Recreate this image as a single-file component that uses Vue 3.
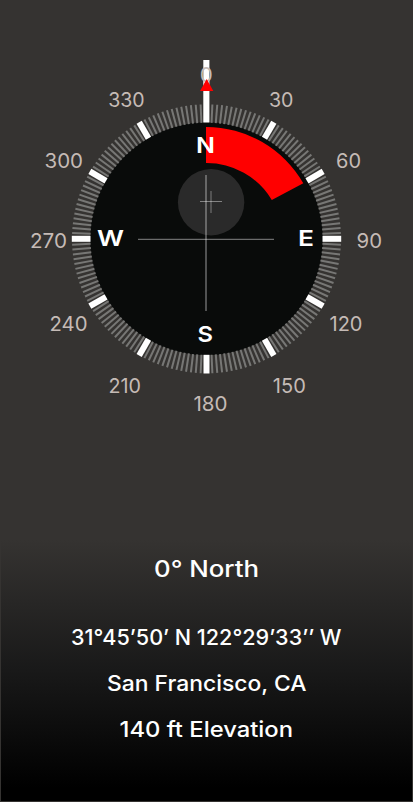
<script setup>
const CX = 206.5
const CY = 238.8
const minor = []
for (let q = 0; q < 12; q++) {
  for (let i = 0; i <= 12; i++) minor.push(q * 30 + 2.5 + i * 2.083)
}
const major = Array.from({ length: 11 }, (_, i) => (i + 1) * 30)

// x, baseline and width of every degree label
const degrees = [
  { t: '0', x: 199.7, y: 82, w: 13 },
  { t: '30', x: 269, y: 106.5, w: 24.5 },
  { t: '60', x: 336, y: 168, w: 25 },
  { t: '90', x: 356.5, y: 248, w: 25.5 },
  { t: '120', x: 329.5, y: 330.5, w: 33 },
  { t: '150', x: 272.8, y: 392.5, w: 33 },
  { t: '180', x: 193.5, y: 411, w: 34 },
  { t: '210', x: 108.5, y: 392.5, w: 32.5 },
  { t: '240', x: 49.5, y: 330.5, w: 38 },
  { t: '270', x: 30, y: 248, w: 37 },
  { t: '300', x: 44.5, y: 168, w: 38.5 },
  { t: '330', x: 108.2, y: 106.5, w: 36.5 },
]
const points = [
  { t: 'N', x: 196, y: 153.3, w: 19 },
  { t: 'E', x: 298, y: 246.2, w: 16 },
  { t: 'S', x: 197.5, y: 341.7, w: 15.5 },
  { t: 'W', x: 97, y: 246.2, w: 27 },
]
const readout = [
  { t: '0° North', x: 154, y: 576.5, w: 105, s: 22.3 },
  { t: '31°45’50’ N 122°29’33’’ W', x: 71, y: 645, w: 270.5, s: 21.3 },
  { t: 'San Francisco, CA', x: 107, y: 691, w: 199.5, s: 21.3 },
  { t: '140 ft Elevation', x: 119.5, y: 737, w: 173.5, s: 21.3 },
]
</script>

<template>
  <main class="screen">
    <svg class="compass" viewBox="0 0 413 540" width="413" height="540">
      <circle :cx="CX" :cy="CY" r="116.5" fill="#090b0a" />
      <g class="minor">
        <line v-for="a in minor" :key="a" :x1="CX" :x2="CX" :y1="CY - 134.5" :y2="CY - 116" :transform="`rotate(${a} ${CX} ${CY})`" />
      </g>
      <g class="major">
        <line v-for="a in major" :key="a" :x1="CX" :x2="CX" :y1="CY - 134.7" :y2="CY - 116" :transform="`rotate(${a} ${CX} ${CY})`" />
      </g>
      <path d="M206 127A112 112 0 0 1 303.3 183.3L271.8 200A76 76 0 0 0 206 163Z" fill="#f00" />
      <circle cx="211.1" cy="202.2" r="33.2" fill="#2a2a2a" />
      <path class="cross" d="M206 175V311" stroke-width="1.8" stroke-opacity=".33" />
      <path class="cross" d="M211 191V213" stroke-width="1.8" stroke-opacity=".22" />
      <path class="cross" d="M138 239.3H274" stroke-width="1.3" stroke-opacity=".4" />
      <path class="cross" d="M200 201.5H222" stroke-width="1" stroke-opacity=".42" />
      <rect x="203.3" y="60" width="6.1" height="62.5" fill="#fff" />
      <text v-for="d in degrees" :key="d.t" class="degree" :x="d.x" :y="d.y" :textLength="d.w" lengthAdjust="spacingAndGlyphs">{{ d.t }}</text>
      <path d="M206.7 79L213.3 91H200Z" fill="#f00" />
      <text v-for="p in points" :key="p.t" class="point" :x="p.x" :y="p.y" :textLength="p.w" lengthAdjust="spacingAndGlyphs">{{ p.t }}</text>
    </svg>
    <svg class="readout" viewBox="0 540 413 262" width="413" height="262">
      <text v-for="r in readout" :key="r.t" :x="r.x" :y="r.y" :font-size="r.s" :textLength="r.w" lengthAdjust="spacingAndGlyphs">{{ r.t }}</text>
    </svg>
  </main>
</template>

<style>
body { margin: 0; background: #353331; }
</style>
<style scoped>
.screen {
  width: 413px;
  height: 802px;
  box-sizing: border-box;
  display: flex;
  flex-direction: column;
  overflow: hidden;
  font-family: Inter, sans-serif;
  background: linear-gradient(#353331 0, #353331 540px, #191919 670px, #000 788px) 1px 0 / 411px 801px no-repeat, #353331;
}
svg { display: block; flex: none; }
.minor line { stroke: #777775; stroke-width: 2; }
.major line { stroke: #fff; stroke-width: 6; }
.cross { stroke: #fff; fill: none; }
.degree { fill: #c5bbb6; font-size: 20px; }
.point { fill: #fff; font-size: 22px; font-weight: 600; }
.readout text { fill: #fff; font-weight: 500; }
</style>
